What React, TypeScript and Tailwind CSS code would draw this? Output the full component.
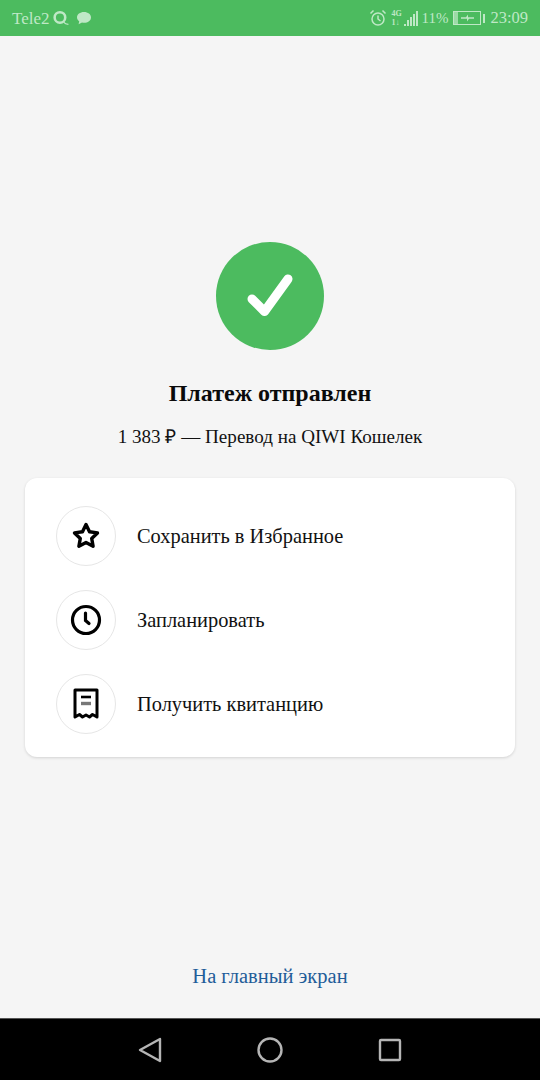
import type { ReactNode } from 'react'

const serif = "font-['Liberation_Serif',serif]"

function StatusBar() {
  return (
    <div className={`flex h-9 shrink-0 items-center justify-between bg-[#4cbb5f] pl-3 pr-3 text-[#bfe8c6] ${serif}`}>
      <div className="flex items-center">
        <span className="text-[17px] leading-none">Tele2</span>
        <svg width="18" height="18" viewBox="0 0 17 17" className="ml-[2px]" fill="none" stroke="currentColor">
          <circle cx="7.500" cy="8" r="5" strokeWidth="2.400" />
          <path d="M11 12.500c1 1.300 2.600 2 4.500 2" strokeWidth="1.200" />
        </svg>
        <svg width="16" height="14" viewBox="0 0 16 14" className="ml-[6px]" fill="currentColor">
          <path d="M8 1c4 0 7 2.300 7 5.400s-3 5.400-7 5.400c-.7 0-1.300-.1-2-.2L2.600 13.200l.6-3C1.800 9.200 1 7.900 1 6.400 1 3.300 4 1 8 1z" />
        </svg>
      </div>
      <div className="flex items-center">
        <svg width="18" height="18" viewBox="0 0 18 18" fill="none" stroke="currentColor" strokeWidth="1.500">
          <circle cx="9" cy="10" r="6" />
          <path d="M9 6.500V10l2.500 2M1.500 4.500l3-3M16.500 4.500l-3-3" />
        </svg>
        <div className="ml-[4px] flex w-[11px] flex-col text-[8px] font-bold leading-[9px]">
          <span>4G</span>
          <span>1↓</span>
        </div>
        <div className="ml-[2px] flex h-[15px] items-end gap-[1px]">
          <div className="h-[2px] w-[2px] bg-current" />
          <div className="h-[6px] w-[2px] bg-current" />
          <div className="h-[9px] w-[2px] bg-current" />
          <div className="h-[12px] w-[2px] bg-current" />
          <div className="h-[15px] w-[2px] bg-current" />
        </div>
        <span className="ml-[3px] text-[15px] leading-none">11%</span>
        <div className="ml-[5px] flex items-center">
          <div className="relative flex h-[14px] w-[28px] items-center justify-center border border-current">
            <div className="absolute inset-y-0 left-0 w-[4px] bg-current opacity-70" />
            <svg width="13" height="8" viewBox="0 0 13 8" fill="currentColor">
              <path d="M0 3.300h5L7 .5v2.800h6v1.400H8L6 7.500V4.700H0z" />
            </svg>
          </div>
          <div className="ml-[2px] h-[9px] w-[2px] bg-current" />
        </div>
        <span className="ml-[5px] text-[16.500px] leading-none">23:09</span>
      </div>
    </div>
  )
}

function ActionRow({ icon, label }: { icon: ReactNode; label: string }) {
  return (
    <div className="flex items-center gap-[21px]">
      <div className="flex h-[60px] w-[60px] shrink-0 items-center justify-center rounded-full border border-[#e6e6e6] bg-white">
        {icon}
      </div>
      <span className="text-[20.400px] leading-none text-[#111]">{label}</span>
    </div>
  )
}

const starIcon = (
  <svg width="30" height="30" viewBox="0 0 30 30" fill="none" stroke="#000" strokeWidth="3.400" strokeLinejoin="round">
    <path d="M15 3.500l3.500 7.300 8 1.100-5.800 5.500 1.400 7.900-7.100-3.800-7.100 3.800 1.400-7.900-5.800-5.500 8-1.100z" />
  </svg>
)

const clockIcon = (
  <svg width="32" height="32" viewBox="0 0 32 32" fill="none" stroke="#000" strokeWidth="3.200" strokeLinecap="round">
    <circle cx="16" cy="16" r="13.500" />
    <path d="M15.500 9v7.500l3.500 3" />
  </svg>
)

const receiptIcon = (
  <svg width="26" height="32" viewBox="0 0 26 32" fill="none" stroke="#000">
    <path d="M2 2h22v27l-4.500-2.500-3 2.500-3.500-2-3.500 2-3-2.500L2 29z" strokeWidth="3" strokeLinejoin="round" />
    <path d="M8 9h10" strokeWidth="2.600" />
    <path d="M8 15.500h10" strokeWidth="3.400" stroke="#777" />
  </svg>
)

export default function App() {
  return (
    <div className={`flex h-[1080px] w-[540px] flex-col bg-[#f5f5f5] ${serif}`}>
      <StatusBar />

      <main className="flex flex-1 flex-col items-center pt-[206px]">
        <div className="flex h-[108px] w-[108px] items-center justify-center rounded-full bg-[#4cbb5f]">
          <svg width="108" height="108" viewBox="0 0 108 108" fill="none" stroke="#fff" strokeWidth="9" strokeLinecap="round" strokeLinejoin="round">
            <path d="M36 57l12.500 12.500L72 37" />
          </svg>
        </div>

        <h1 className="mt-[29px] text-[24px] font-bold leading-[28px] text-[#0a0a0a]">Платеж отправлен</h1>
        <p className="mt-[18px] text-[19.100px] leading-[24px] text-[#111]">1 383 ₽ — Перевод на QIWI Кошелек</p>

        <div className="mt-[29px] flex w-[490px] flex-col gap-6 rounded-[12px] bg-white pb-[23px] pl-[31px] pt-[28px] shadow-[0_1px_3px_rgba(0,0,0,0.14)]">
          <ActionRow icon={starIcon} label="Сохранить в Избранное" />
          <ActionRow icon={clockIcon} label="Запланировать" />
          <ActionRow icon={receiptIcon} label="Получить квитанцию" />
        </div>

        <a className="mt-auto mb-[30px] text-[20.500px] leading-[24px] text-[#1f5d99]">На главный экран</a>
      </main>

      <nav className="flex h-[62px] shrink-0 items-center justify-between border-t border-[#555] bg-black pl-[138px] pr-[138px]">
        <svg width="24" height="26" viewBox="0 0 24 26" fill="none" stroke="#b5b5b5" strokeWidth="2.400" strokeLinejoin="round">
          <path d="M22 2L2 13l20 11z" />
        </svg>
        <svg width="26" height="26" viewBox="0 0 26 26" fill="none" stroke="#b5b5b5" strokeWidth="2.400">
          <circle cx="13" cy="13" r="11.500" />
        </svg>
        <svg width="24" height="24" viewBox="0 0 24 24" fill="none" stroke="#b5b5b5" strokeWidth="2.400" strokeLinejoin="round">
          <rect x="2" y="2" width="20" height="20" rx="1" />
        </svg>
      </nav>
    </div>
  )
}
